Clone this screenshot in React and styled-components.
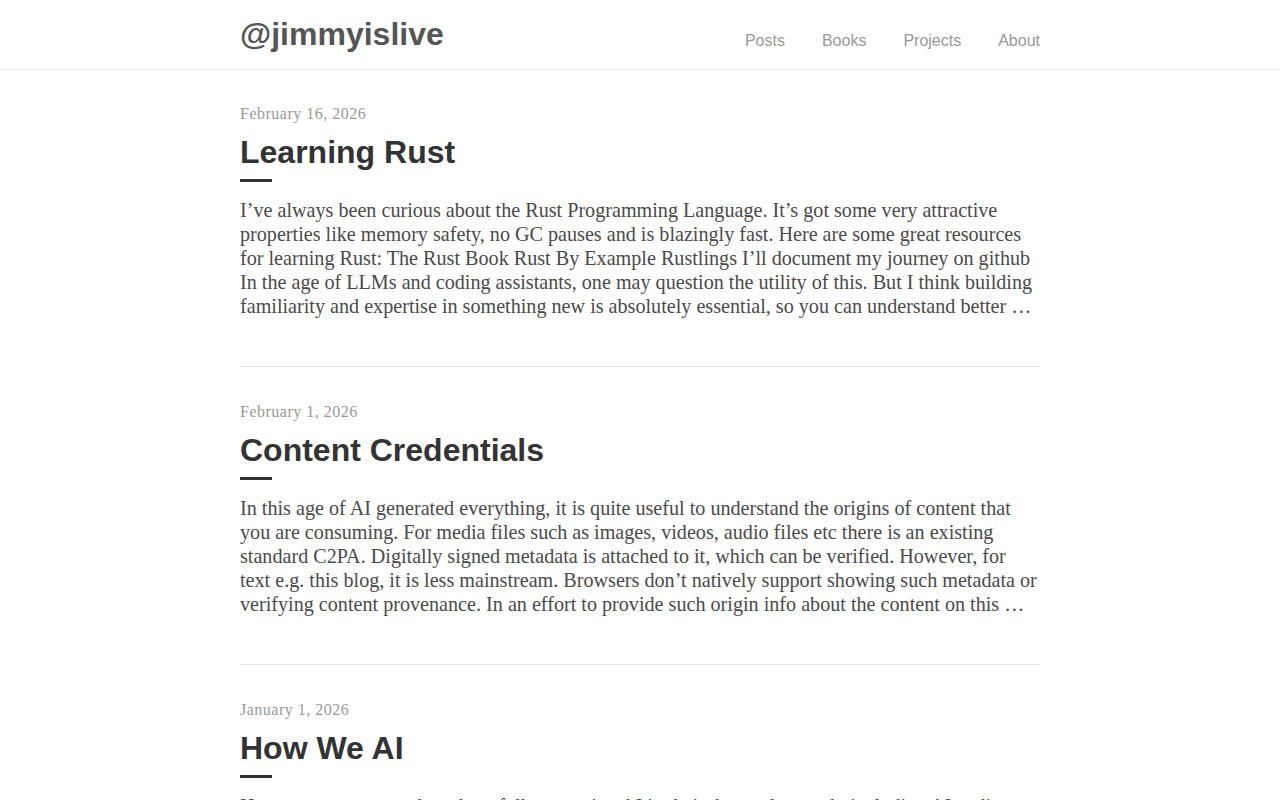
import React from 'react';
import styled, { createGlobalStyle } from 'styled-components';

const GlobalStyle = createGlobalStyle`
  html, body {
    margin: 0;
    padding: 0;
    background: #fff;
  }
  body {
    font-family: "Liberation Serif", "Times New Roman", serif;
    overflow: hidden;
  }
`;

const Header = styled.header`
  border-bottom: 1px solid #eeeeee;
  height: 69px;
`;

const HeaderInner = styled.div`
  width: 800px;
  margin: 0 auto;
  height: 100%;
  display: flex;
  align-items: flex-start;
  justify-content: space-between;
`;

const Logo = styled.a`
  font-family: "Liberation Sans", Arial, sans-serif;
  font-weight: 700;
  font-size: 32px;
  line-height: 36px;
  color: #555555;
  text-decoration: none;
  margin-top: 16px;
`;

const Nav = styled.nav`
  display: flex;
  gap: 37px;
  margin-top: 32px;
`;

const NavLink = styled.a`
  font-family: "Liberation Sans", Arial, sans-serif;
  font-size: 16px;
  line-height: 18px;
  color: #999999;
  text-decoration: none;
`;

const Main = styled.main`
  width: 800px;
  margin: 0 auto;
  padding-top: 34px;
`;

const Post = styled.article`
  padding-bottom: 48px;
  border-bottom: 1px solid #e5e5e5;
  margin-bottom: 35px;
`;

const PostDate = styled.div`
  font-family: "Liberation Serif", "Times New Roman", serif;
  font-size: 16px;
  line-height: 20px;
  color: #999999;
  letter-spacing: 0.5px;
`;

const Title = styled.h2`
  font-family: "Liberation Sans", Arial, sans-serif;
  font-weight: 700;
  font-size: 32px;
  line-height: 38px;
  color: #333333;
  margin: 9px 0 0 0;

  &::after {
    content: '';
    display: block;
    width: 32px;
    height: 3px;
    background: #333333;
    margin-top: 8px;
  }
`;

const Excerpt = styled.p`
  font-family: "Liberation Serif", "Times New Roman", serif;
  font-size: 20.15px;
  line-height: 24px;
  color: #4a4a4a;
  margin: 16px 0 0 0;
`;

const posts = [
  {
    date: 'February 16, 2026',
    title: 'Learning Rust',
    excerpt:
      'I’ve always been curious about the Rust Programming Language. It’s got some very attractive properties like memory safety, no GC pauses and is blazingly fast. Here are some great resources for learning Rust: The Rust Book Rust By Example Rustlings I’ll document my journey on github In the age of LLMs and coding assistants, one may question the utility of this. But I think building familiarity and expertise in something new is absolutely essential, so you can understand better …',
  },
  {
    date: 'February 1, 2026',
    title: 'Content Credentials',
    excerpt:
      'In this age of AI generated everything, it is quite useful to understand the origins of content that you are consuming. For media files such as images, videos, audio files etc there is an existing standard C2PA. Digitally signed metadata is attached to it, which can be verified. However, for text e.g. this blog, it is less mainstream. Browsers don’t natively support showing such metadata or verifying content provenance. In an effort to provide such origin info about the content on this …',
  },
  {
    date: 'January 1, 2026',
    title: 'How We AI',
    excerpt:
      'Here are some notes about how folks are using AI in their day to day work, including AI coding assistants, agents and chat tools. I asked a few friends and colleagues to share their workflows and what has worked well for them so far, and what has not …',
  },
];

export default function App() {
  return (
    <>
      <GlobalStyle />
      <Header>
        <HeaderInner>
          <Logo href="#">@jimmyislive</Logo>
          <Nav>
            <NavLink href="#">Posts</NavLink>
            <NavLink href="#">Books</NavLink>
            <NavLink href="#">Projects</NavLink>
            <NavLink href="#">About</NavLink>
          </Nav>
        </HeaderInner>
      </Header>
      <Main>
        {posts.map(p => (
          <Post key={p.title}>
            <PostDate>{p.date}</PostDate>
            <Title>{p.title}</Title>
            <Excerpt>{p.excerpt}</Excerpt>
          </Post>
        ))}
      </Main>
    </>
  );
}
